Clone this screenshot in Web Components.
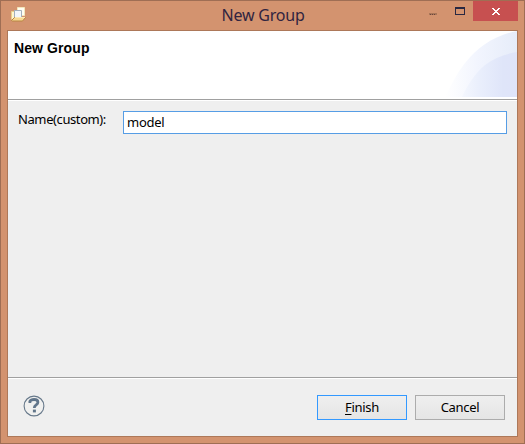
<!DOCTYPE html>
<html lang="en">
<head>
<meta charset="utf-8">
<title>New Group</title>
<style>
html,body{margin:0;height:100%;overflow:hidden}
body{font-family:"Noto Sans","Open Sans",sans-serif;font-size:13px;color:#000}
</style>
</head>
<body>
<wizard-window>
  <title-bar slot="title">New Group</title-bar>
  <wizard-header slot="header">New Group</wizard-header>
  <text-field slot="body" value="model">Name(custom):</text-field>
  <wizard-footer slot="footer">
    <push-button primary><u>F</u>inish</push-button>
    <push-button>Cancel</push-button>
  </wizard-footer>
</wizard-window>
<script>
const define = (name, html) => customElements.define(name, class extends HTMLElement {
  constructor() {
    super();
    this.attachShadow({mode: 'open'}).innerHTML = html;
  }
  connectedCallback() {
    const value = this.shadowRoot.querySelector('.value');
    if (value) value.textContent = this.getAttribute('value');
  }
});

define('wizard-window', `<style>
:host{display:flex;flex-direction:column;box-sizing:border-box;width:525px;height:444px;background:#d3936f;border:1px solid #9f6e54;padding:0 6px 6px}
.client{flex:1;display:flex;flex-direction:column;border:1px solid #ad7859;background:#efefef;min-height:0}
.body{flex:1;padding:11px 10px 0}
</style><slot name="title"></slot><div class="client"><slot name="header"></slot><div class="body"><slot name="body"></slot></div><slot name="footer"></slot></div>`);

define('title-bar', `<style>
:host{display:grid;grid-template-columns:1fr auto 1fr;height:29px;color:#302440}
.icon{padding:5px 0 0 3px}
svg{display:block}
.text{font-size:16px;line-height:29px;letter-spacing:-.2px;padding-left:1px;white-space:nowrap}
.controls{display:flex;justify-content:flex-end}
.close{background:#c75050;width:45px;height:20px}
</style>
<div class="icon"><svg width="17" height="17" viewBox="0 0 17 17">
<path d="M7.5 1.5h7v8h-7z" fill="#fffef2" stroke="#f3e7bd"/>
<path d="M1.5 13.5V5.5h3v7" fill="#fff5cf" stroke="#ead18c"/>
<path d="M4.5 4.5h7v7h-7z" fill="#f3f6fa" stroke="#a3b0bc"/>
<path d="M1.5 14.5l3-3h11l-3 3.5h-10z" fill="#f8d994" stroke="#b98643"/>
<path d="M5 11.5h10" stroke="#fdeab8"/>
</svg></div>
<div class="text"><slot></slot></div>
<div class="controls">
<svg width="45" height="20" viewBox="0 0 45 20"><path d="M1 12h8v2H1z" fill="#a97658"/><path d="M2 13h1v1H2zm2 0h1v1H4zm2 0h1v1H6z" fill="#69443c"/><path d="M27 6h10v8H27zm1 2v5h8V8z" fill="#282842" fill-rule="evenodd"/></svg>
<svg class="close" viewBox="0 0 45 20"><path d="M19 7h2v1h1v1h2v-1h1v-1h2v1h-1v1h-1v1h-1v1h1v1h1v1h1v1h-2v-1h-1v-1h-2v1h-1v1h-2v-1h1v-1h1v-1h1v-1h-1v-1h-1v-1h-1z" fill="#fff"/></svg>
</div>`);

define('wizard-header', `<style>
:host{display:flex;justify-content:space-between;height:68px;background:#fff;border-bottom:1px solid #a0a0a0;box-shadow:0 1px #fff}
.text{font:bold 14px/16px "Liberation Sans",Arial,sans-serif;letter-spacing:.1px;padding:9px 0 0 6px}
svg{display:block}
</style><div class="text"><slot></slot></div>
<svg width="75" height="66" viewBox="0 0 75 66"><defs>
<linearGradient id="outer"><stop offset="0" stop-color="#fff"/><stop offset=".45" stop-color="#f2f5fe"/><stop offset="1" stop-color="#e6ecf9"/></linearGradient>
<linearGradient id="inner"><stop offset="0" stop-color="#f4f7fe"/><stop offset=".3" stop-color="#eaeffc"/><stop offset=".75" stop-color="#dfe5f9"/><stop offset="1" stop-color="#dfe4f9"/></linearGradient></defs>
<path d="M3 66C9 54 15 42 23 32C36 16 53 4 75 0V66z" fill="url(#outer)"/>
<path d="M20 66C24 57 32 43 43 34C52 27 63 23 75 21V66z" fill="url(#inner)"/></svg>`);

define('text-field', `<style>
:host{display:flex;align-items:flex-start}
.label{width:105px;line-height:17px;letter-spacing:-.4px;white-space:nowrap}
.value{flex:1;box-sizing:border-box;height:23px;border:1px solid #569de5;background:#fff;padding-left:3px;line-height:21px;letter-spacing:-.25px}
</style><span class="label"><slot></slot></span><span class="value"></span>`);

define('wizard-footer', `<style>
:host{display:flex;align-items:flex-start;gap:8px;height:59px;box-sizing:border-box;border-top:1px solid #a0a0a0;box-shadow:inset 0 1px #fff;padding:17px 12px 0 15px}
svg{display:block;margin-right:auto}
</style><svg width="22" height="22" viewBox="0 0 22 22"><circle cx="11" cy="11" r="9.9" fill="#f0f0ef" stroke="#66788a" stroke-width="1.1"/><path d="M6.9 8V6.3C7.6 5 9 4.5 11 4.5c2.6 0 3.9 1 3.9 2.8 0 1.5-.9 2-2 2.8-1.2.8-1.6 1.4-1.6 3" fill="none" stroke="#61758a" stroke-width="2.8"/><path d="M9.9 14.6h3v2.8h-3z" fill="#61758a"/></svg><slot></slot>`);

define('push-button', `<style>
:host{box-sizing:border-box;width:90px;height:25px;border:1px solid #acacac;background:linear-gradient(#efefef,#e5e5e5);text-align:center;line-height:23px;letter-spacing:-.3px}
:host([primary]){border-color:#3399ff}
::slotted(u){text-underline-offset:2px}
</style><slot></slot>`);
</script>
</body>
</html>
